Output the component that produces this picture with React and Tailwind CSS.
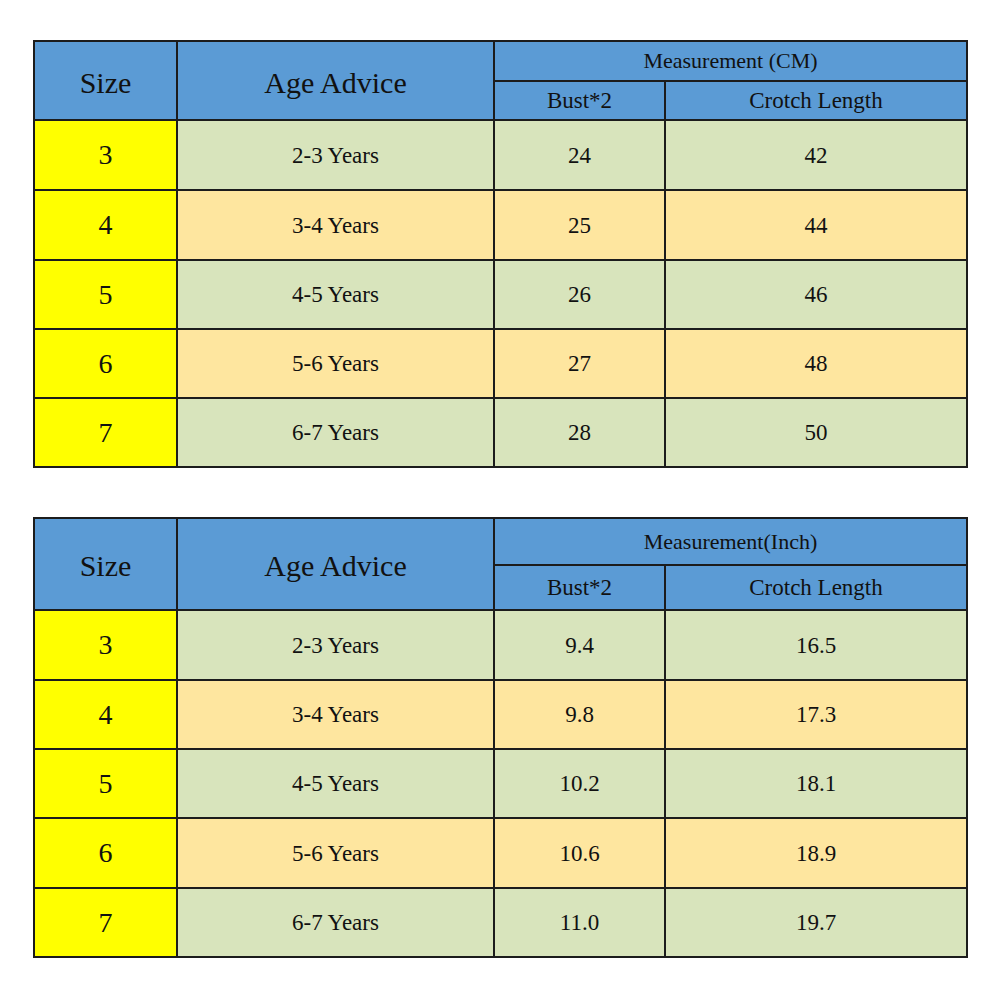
import React from 'react';

const tables = [
  {
    title: 'Measurement (CM)',
    h1: 'h-[38px]',
    h2: 'h-[37px]',
    mt: 'mt-[40px]',
    heights: ['h-[68px]', 'h-[68px]', 'h-[67px]', 'h-[67px]', 'h-[67px]'],
    rows: [
      ['3', '2-3 Years', '24', '42'],
      ['4', '3-4 Years', '25', '44'],
      ['5', '4-5 Years', '26', '46'],
      ['6', '5-6 Years', '27', '48'],
      ['7', '6-7 Years', '28', '50'],
    ],
  },
  {
    title: 'Measurement(Inch)',
    h1: 'h-[45px]',
    h2: 'h-[43px]',
    mt: 'mt-[49px]',
    heights: ['h-[68px]', 'h-[67px]', 'h-[67px]', 'h-[68px]', 'h-[67px]'],
    rows: [
      ['3', '2-3 Years', '9.4', '16.5'],
      ['4', '3-4 Years', '9.8', '17.3'],
      ['5', '4-5 Years', '10.2', '18.1'],
      ['6', '5-6 Years', '10.6', '18.9'],
      ['7', '6-7 Years', '11.0', '19.7'],
    ],
  },
];

const cell = 'flex items-center justify-center';

function SizeTable({ t }) {
  return (
    <div className={`${t.mt} ml-[33px] w-[935px] border-2 border-[#1c1c1c] bg-[#1c1c1c] grid grid-cols-[141px_315px_169px_300px] gap-[2px] text-[#111]`}>
      {/* header */}
      <div className={`${cell} row-span-2 bg-[#5b9bd5] text-[30px] pt-1`}>Size</div>
      <div className={`${cell} row-span-2 bg-[#5b9bd5] text-[30px] pt-1`}>Age Advice</div>
      <div className={`${cell} col-span-2 bg-[#5b9bd5] text-[22px] ${t.h1}`}>{t.title}</div>
      <div className={`${cell} bg-[#5b9bd5] text-[23px] ${t.h2}`}>Bust*2</div>
      <div className={`${cell} bg-[#5b9bd5] text-[23px] ${t.h2}`}>Crotch Length</div>

      {t.rows.map((r, i) => {
        const bg = i % 2 === 0 ? 'bg-[#d8e4bc]' : 'bg-[#fee69f]';
        return (
          <React.Fragment key={i}>
            <div className={`${cell} ${t.heights[i]} bg-[#ffff00] text-[28px]`}>{r[0]}</div>
            <div className={`${cell} ${bg} text-[23px]`}>{r[1]}</div>
            <div className={`${cell} ${bg} text-[23px]`}>{r[2]}</div>
            <div className={`${cell} ${bg} text-[23px]`}>{r[3]}</div>
          </React.Fragment>
        );
      })}
    </div>
  );
}

export default function App() {
  return (
    <div className="w-[1000px] h-[1000px] bg-white overflow-hidden font-['Liberation_Serif',serif] leading-none">
      {tables.map((t, i) => (
        <SizeTable key={i} t={t} />
      ))}
    </div>
  );
}
